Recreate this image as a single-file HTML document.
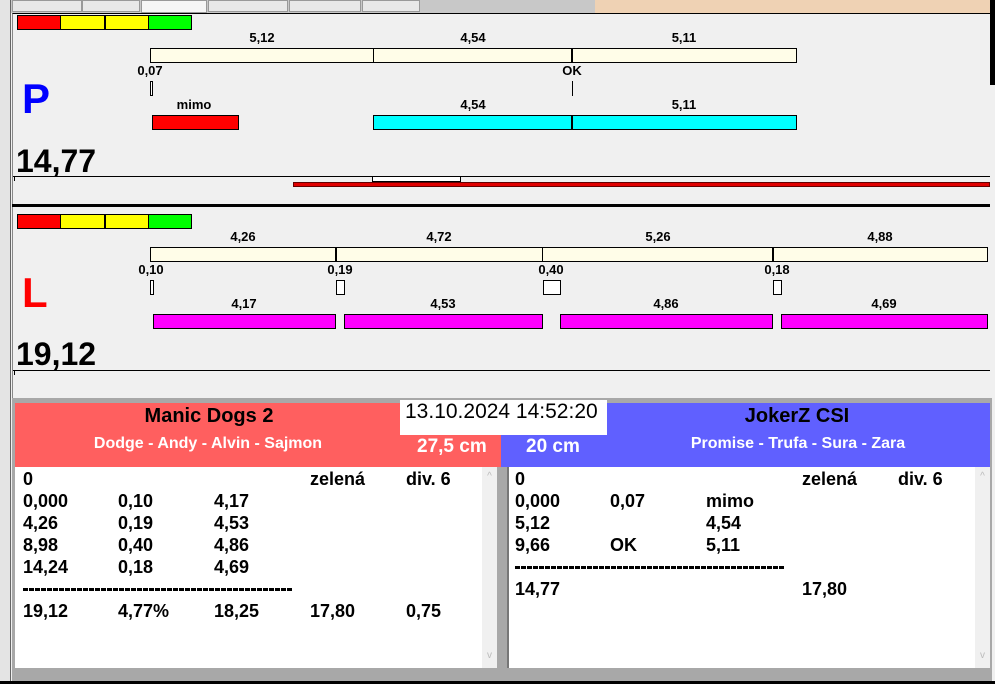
<!DOCTYPE html>
<html><head><meta charset="utf-8"><style>
*{margin:0;padding:0;box-sizing:border-box}
body{width:995px;height:684px;position:relative;overflow:hidden;background:#f0f0f0;font-family:"Liberation Sans",Arial,sans-serif}
div{position:absolute}
.b{border:1px solid #000}
.l{font-size:13px;font-weight:bold;width:60px;text-align:center;line-height:14px}
.r{font-size:18px;font-weight:bold;line-height:22px;white-space:nowrap}
.d{font-size:13px;font-weight:bold;line-height:10px;letter-spacing:-1.6px;white-space:nowrap;overflow:hidden;width:270px}
</style></head><body>
<div style="left:0;top:0;width:995px;height:13px;background:#c8c8c8"></div>
<div style="left:595px;top:0;width:395px;height:13px;background:#efd2b4"></div>
<div style="left:12px;top:0;width:70px;height:12px;background:#e8e8e8;border:1px solid #999"></div>
<div style="left:82px;top:0;width:58px;height:12px;background:#e8e8e8;border:1px solid #999"></div>
<div style="left:141px;top:0;width:66px;height:13px;background:#f6f6f6;border:1px solid #999"></div>
<div style="left:208px;top:0;width:80px;height:12px;background:#e8e8e8;border:1px solid #999"></div>
<div style="left:289px;top:0;width:72px;height:12px;background:#e8e8e8;border:1px solid #999"></div>
<div style="left:362px;top:0;width:58px;height:12px;background:#e8e8e8;border:1px solid #999"></div>
<div style="left:990px;top:0;width:5px;height:85px;background:#000"></div>
<div style="left:0;top:0;width:11px;height:684px;background:#e4e4e4;border-right:1px solid #666"></div>
<div style="left:12px;top:13px;width:978px;height:390px;border-top:1px solid #000;border-left:1px solid #888;background:#f0f0f0"></div>

<div style="left:17px;top:15px;width:44px;height:15px;background:#f00;border:1px solid #000"></div>
<div style="left:61px;top:15px;width:44px;height:15px;background:#ff0;border:1px solid #000;border-left:0"></div>
<div style="left:105px;top:15px;width:44px;height:15px;background:#ff0;border:1px solid #000"></div>
<div style="left:149px;top:15px;width:43px;height:15px;background:#0f0;border:1px solid #000;border-left:0"></div>

<div class="l" style="left:232px;top:31px">5,12</div>
<div class="l" style="left:443px;top:31px">4,54</div>
<div class="l" style="left:654px;top:31px">5,11</div>
<div class="b" style="left:150px;top:48px;width:647px;height:15px;background:#fffde8"></div>
<div style="left:373px;top:48px;width:1px;height:15px;background:#000"></div>
<div style="left:571px;top:48px;width:2px;height:15px;background:#000"></div>
<div class="l" style="left:120px;top:64px">0,07</div>
<div class="l" style="left:542px;top:64px">OK</div>
<div class="b" style="left:150px;top:81px;width:3px;height:15px;background:#fff"></div>
<div style="left:572px;top:81px;width:1px;height:15px;background:#000"></div>
<div style="left:22px;top:74px;font-size:42px;font-weight:bold;color:#0000ff;line-height:50px">P</div>
<div class="l" style="left:164px;top:98px">mimo</div>
<div class="l" style="left:443px;top:98px">4,54</div>
<div class="l" style="left:654px;top:98px">5,11</div>
<div class="b" style="left:152px;top:115px;width:87px;height:15px;background:#f00"></div>
<div class="b" style="left:373px;top:115px;width:424px;height:15px;background:#0ff"></div>
<div style="left:571px;top:115px;width:2px;height:15px;background:#000"></div>
<div style="left:16px;top:143px;font-size:32px;font-weight:bold;line-height:36px">14,77</div>
<div style="left:13px;top:176px;width:977px;height:1px;background:#000"></div>
<div style="left:14px;top:176px;width:1px;height:5px;background:#000"></div>
<div class="b" style="left:372px;top:176px;width:89px;height:6px;background:#fff"></div>
<div style="left:293px;top:182px;width:697px;height:5px;background:#e00000;border:1px solid #600"></div>
<div style="left:12px;top:204px;width:978px;height:3px;background:#000"></div>

<div style="left:17px;top:214px;width:44px;height:15px;background:#f00;border:1px solid #000"></div>
<div style="left:61px;top:214px;width:44px;height:15px;background:#ff0;border:1px solid #000;border-left:0"></div>
<div style="left:105px;top:214px;width:44px;height:15px;background:#ff0;border:1px solid #000"></div>
<div style="left:149px;top:214px;width:43px;height:15px;background:#0f0;border:1px solid #000;border-left:0"></div>
<div class="l" style="left:213px;top:230px">4,26</div>
<div class="l" style="left:409px;top:230px">4,72</div>
<div class="l" style="left:628px;top:230px">5,26</div>
<div class="l" style="left:850px;top:230px">4,88</div>
<div class="b" style="left:150px;top:247px;width:838px;height:15px;background:#fffde8"></div>
<div style="left:335px;top:247px;width:2px;height:15px;background:#000"></div>
<div style="left:542px;top:247px;width:1px;height:15px;background:#000"></div>
<div style="left:772px;top:247px;width:2px;height:15px;background:#000"></div>
<div class="l" style="left:121px;top:263px">0,10</div>
<div class="l" style="left:310px;top:263px">0,19</div>
<div class="l" style="left:521px;top:263px">0,40</div>
<div class="l" style="left:747px;top:263px">0,18</div>
<div class="b" style="left:150px;top:280px;width:4px;height:15px;background:#fff"></div>
<div class="b" style="left:336px;top:280px;width:9px;height:15px;background:#fff"></div>
<div class="b" style="left:543px;top:280px;width:18px;height:15px;background:#fff"></div>
<div class="b" style="left:773px;top:280px;width:9px;height:15px;background:#fff"></div>
<div style="left:22px;top:268px;font-size:42px;font-weight:bold;color:#f00;line-height:50px">L</div>
<div class="l" style="left:214px;top:297px">4,17</div>
<div class="l" style="left:413px;top:297px">4,53</div>
<div class="l" style="left:636px;top:297px">4,86</div>
<div class="l" style="left:854px;top:297px">4,69</div>
<div class="b" style="left:153px;top:314px;width:183px;height:15px;background:#f0f"></div>
<div class="b" style="left:344px;top:314px;width:199px;height:15px;background:#f0f"></div>
<div class="b" style="left:560px;top:314px;width:213px;height:15px;background:#f0f"></div>
<div class="b" style="left:781px;top:314px;width:207px;height:15px;background:#f0f"></div>
<div style="left:16px;top:336px;font-size:32px;font-weight:bold;line-height:36px">19,12</div>
<div style="left:13px;top:370px;width:977px;height:1px;background:#000"></div>
<div style="left:14px;top:370px;width:1px;height:5px;background:#000"></div>

<div style="left:12px;top:398px;width:980px;height:286px;background:#a8a8a8"></div>
<div style="left:15px;top:403px;width:486px;height:64px;background:#ff5f5f"></div>
<div style="left:501px;top:403px;width:489px;height:64px;background:#6060ff"></div>
<div style="left:15px;top:403px;width:388px;text-align:center;font-size:20px;font-weight:bold;line-height:26px">Manic Dogs 2</div>
<div style="left:15px;top:433px;width:386px;text-align:center;font-size:16px;font-weight:bold;color:#fff;line-height:22px">Dodge - Andy - Alvin - Sajmon</div>
<div style="left:652px;top:403px;width:290px;text-align:center;font-size:20px;font-weight:bold;line-height:26px">JokerZ CSI</div>
<div style="left:648px;top:433px;width:300px;text-align:center;font-size:16px;font-weight:bold;color:#fff;line-height:22px">Promise - Trufa - Sura - Zara</div>
<div style="left:400px;top:400px;width:207px;height:35px;background:#fff;font-size:21px;line-height:24px;padding-left:5px;white-space:nowrap">13.10.2024 14:52:20</div>
<div style="left:417px;top:435px;font-size:19px;font-weight:bold;color:#fff;line-height:24px">27,5 cm</div>
<div style="left:526px;top:435px;font-size:19px;font-weight:bold;color:#fff;line-height:24px">20 cm</div>

<div style="left:15px;top:467px;width:482px;height:201px;background:#fff"></div>
<div style="left:482px;top:467px;width:15px;height:201px;background:#f0f0f0;color:#bbb;font-size:10px;text-align:center;line-height:20px">^</div>
<div style="left:507px;top:467px;width:483px;height:201px;background:#fff;border-left:2px solid #777"></div>
<div style="left:975px;top:467px;width:15px;height:201px;background:#f0f0f0;color:#bbb;font-size:10px;text-align:center;line-height:20px">^</div>
<div style="left:482px;top:650px;width:15px;color:#bbb;font-size:10px;text-align:center">v</div>
<div style="left:975px;top:650px;width:15px;color:#bbb;font-size:10px;text-align:center">v</div>

<div class="r" style="left:23px;top:468px">0</div><div class="r" style="left:310px;top:468px">zelená</div><div class="r" style="left:406px;top:468px">div. 6</div>
<div class="r" style="left:23px;top:490px">0,000</div><div class="r" style="left:118px;top:490px">0,10</div><div class="r" style="left:214px;top:490px">4,17</div>
<div class="r" style="left:23px;top:512px">4,26</div><div class="r" style="left:118px;top:512px">0,19</div><div class="r" style="left:214px;top:512px">4,53</div>
<div class="r" style="left:23px;top:534px">8,98</div><div class="r" style="left:118px;top:534px">0,40</div><div class="r" style="left:214px;top:534px">4,86</div>
<div class="r" style="left:23px;top:556px">14,24</div><div class="r" style="left:118px;top:556px">0,18</div><div class="r" style="left:214px;top:556px">4,69</div>
<div style="left:23px;top:588px;width:269px;height:3px;background:repeating-linear-gradient(90deg,#000 0 5px,transparent 5px 6px)"></div>
<div class="r" style="left:23px;top:600px">19,12</div><div class="r" style="left:118px;top:600px">4,77%</div><div class="r" style="left:214px;top:600px">18,25</div><div class="r" style="left:310px;top:600px">17,80</div><div class="r" style="left:406px;top:600px">0,75</div>

<div class="r" style="left:515px;top:468px">0</div><div class="r" style="left:802px;top:468px">zelená</div><div class="r" style="left:898px;top:468px">div. 6</div>
<div class="r" style="left:515px;top:490px">0,000</div><div class="r" style="left:610px;top:490px">0,07</div><div class="r" style="left:706px;top:490px">mimo</div>
<div class="r" style="left:515px;top:512px">5,12</div><div class="r" style="left:706px;top:512px">4,54</div>
<div class="r" style="left:515px;top:534px">9,66</div><div class="r" style="left:610px;top:534px">OK</div><div class="r" style="left:706px;top:534px">5,11</div>
<div style="left:515px;top:566px;width:269px;height:3px;background:repeating-linear-gradient(90deg,#000 0 5px,transparent 5px 6px)"></div>
<div class="r" style="left:515px;top:578px">14,77</div><div class="r" style="left:802px;top:578px">17,80</div>
<div style="left:0;top:681px;width:995px;height:3px;background:#000"></div>
</body></html>
